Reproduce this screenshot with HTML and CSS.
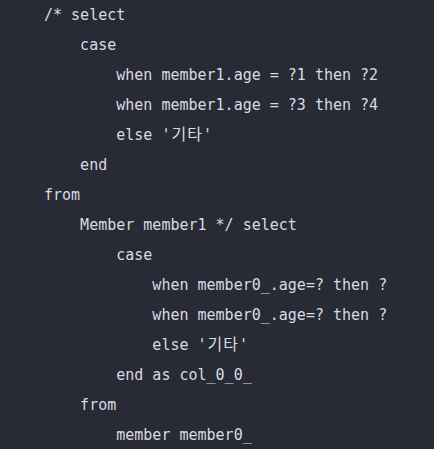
FILE: index.html
```html
<!DOCTYPE html>
<html lang="ko">
<head>
<meta charset="utf-8">
<title>SQL</title>
<link rel="stylesheet" href="styles.css">
</head>
<body>
<pre class="code">/* select
    case
        when member1.age = ?1 then ?2
        when member1.age = ?3 then ?4
        else '<span class="wide">기타</span>'
    end
from
    Member member1 */ select
        case
            when member0_.age=? then ?
            when member0_.age=? then ?
            else '<span class="wide">기타</span>'
        end as col_0_0_
    from
        member member0_</pre>
</body>
</html>
```
FILE: styles.css
```css
html, body {
  margin: 0;
  padding: 0;
  background: #282a35;
}

.code {
  margin: 0;
  padding: 0 0 0 44px;
  font-family: "DejaVu Sans Mono", "Liberation Mono", "Noto Sans CJK KR", monospace;
  font-size: 15px;
  line-height: 30px;
  color: #d8dbe1;
  white-space: pre;
}

.wide {
  font-family: "Noto Sans CJK KR", sans-serif;
  font-size: 16px;
  letter-spacing: 1px;
  margin-left: 1px;
  line-height: 1;
}
```
